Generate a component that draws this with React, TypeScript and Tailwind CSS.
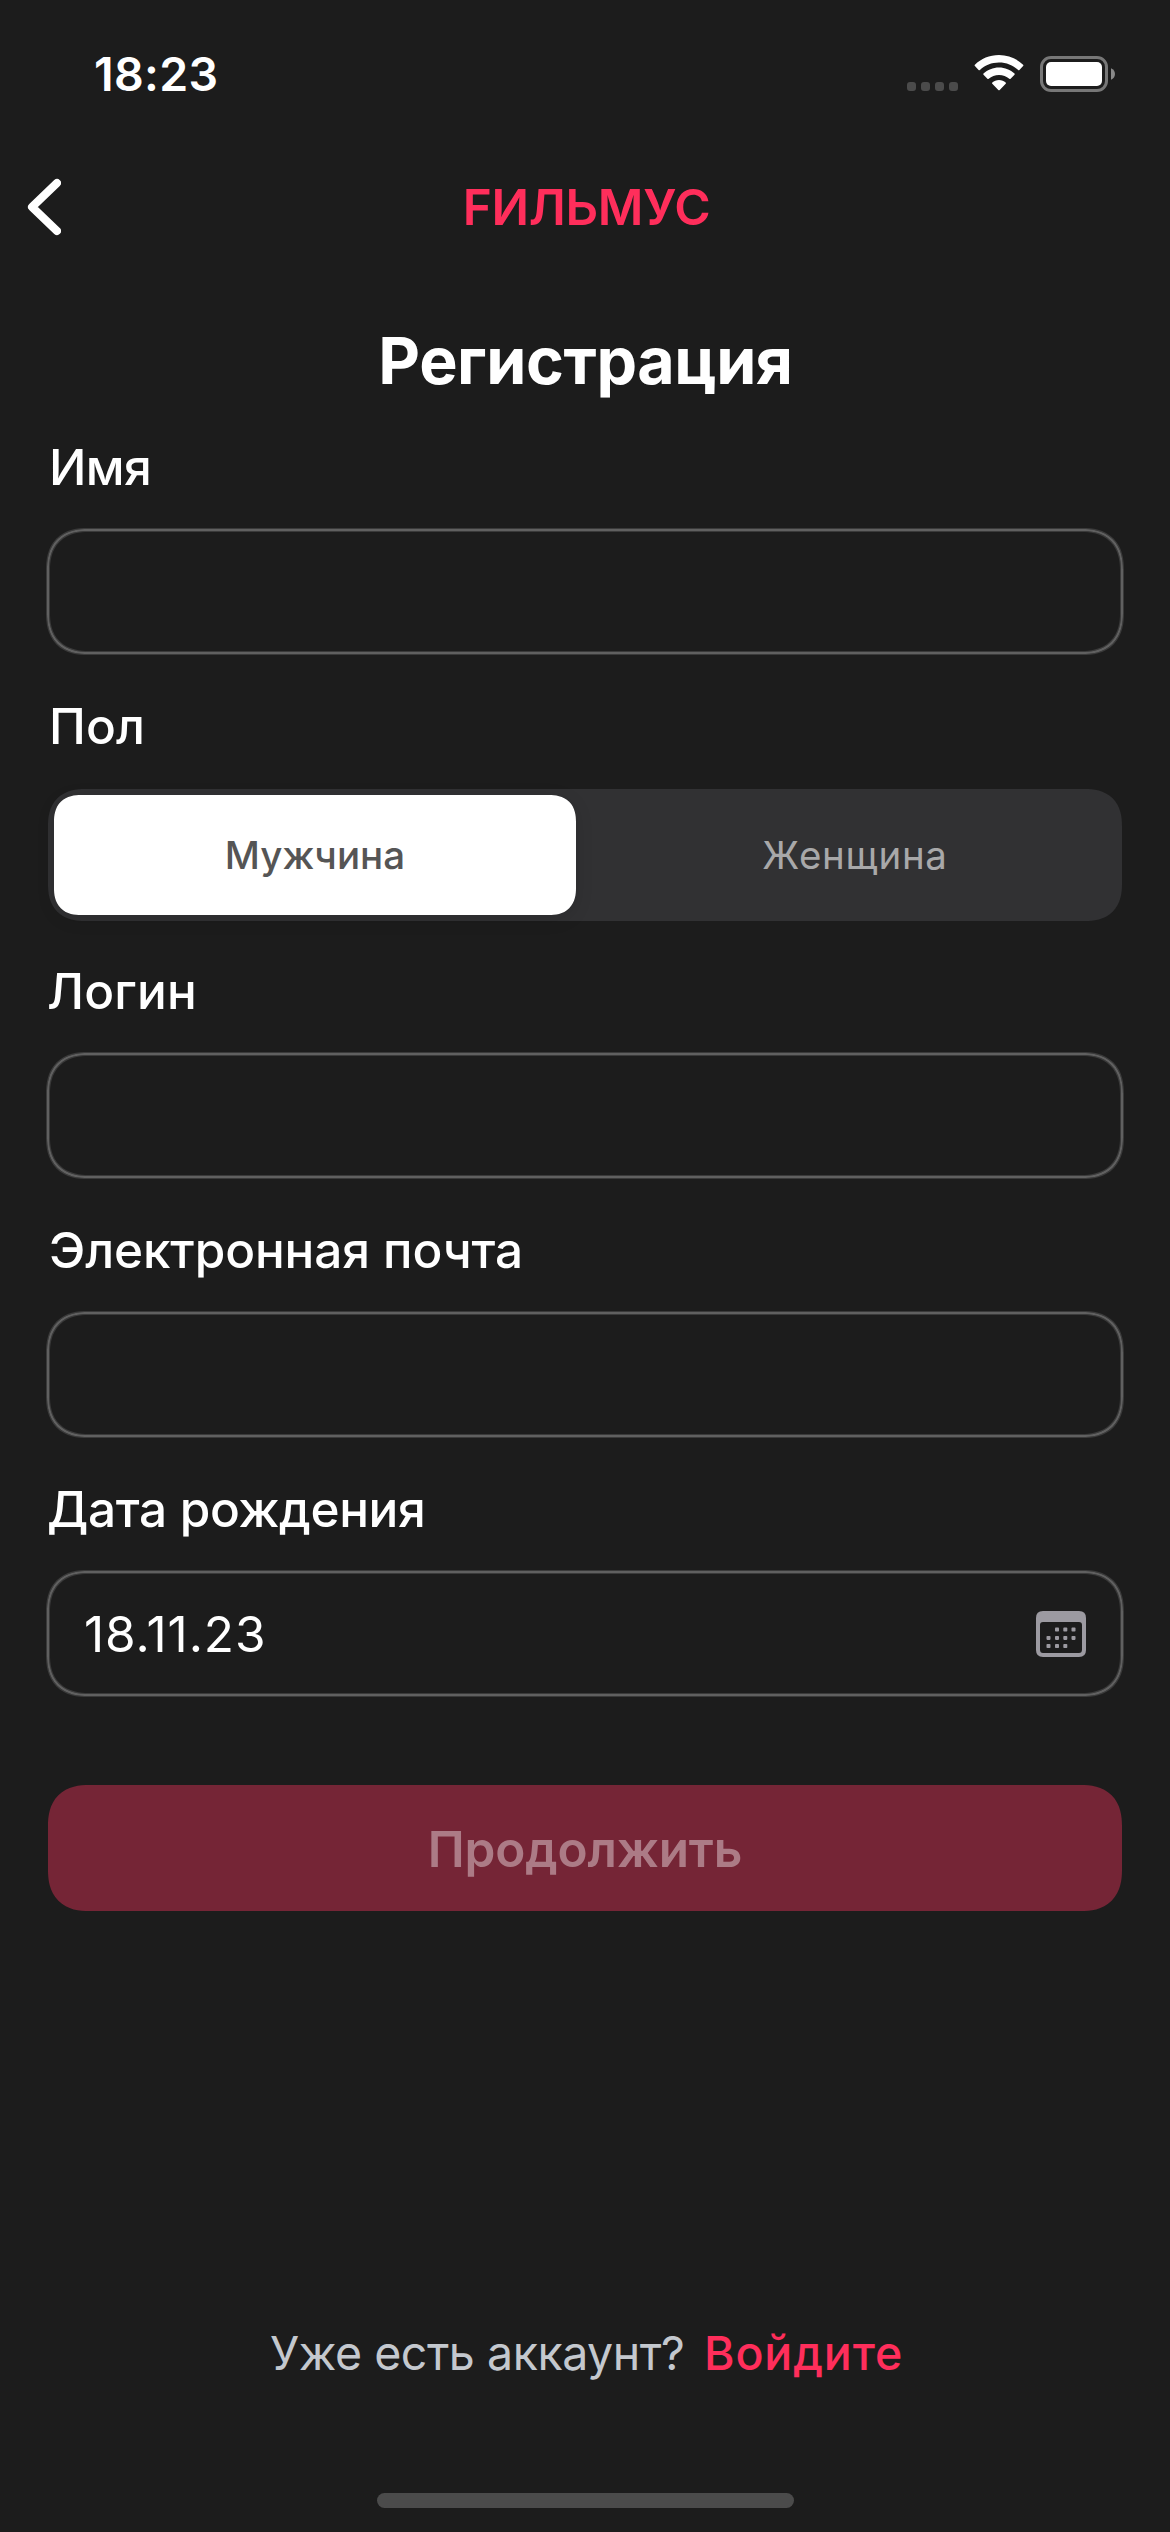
import type { ReactNode } from "react";

function StatusBar() {
  return (
    <header className="flex h-[148px] items-start justify-between pt-[44px] pr-[55px] pl-[94px]">
      <time className="text-[46.5px] leading-[61px] font-semibold tracking-[0.32px]">18:23</time>
      <div className="flex pt-[10px]">
        <div className="mt-[28px] flex gap-[5px]">
          <i className="size-[9px] rounded-[3px] bg-[#4b4b4b]" />
          <i className="size-[9px] rounded-[3px] bg-[#4b4b4b]" />
          <i className="size-[9px] rounded-[3px] bg-[#4b4b4b]" />
          <i className="size-[9px] rounded-[3px] bg-[#4b4b4b]" />
        </div>
        <svg className="ml-[16px]" width="50" height="38" viewBox="0 0 50 38" fill="#fff">
          <path d="M25 1C15.500 1 7 4.700.9 10.700Q.3 11.400.9 12L4.600 15.900Q5.200 16.500 5.900 15.900C11 11.200 17.600 8.500 25 8.500S39 11.200 44.100 15.900Q44.800 16.500 45.400 15.900L49.100 12Q49.700 11.400 49.100 10.700C43 4.700 34.500 1 25 1Z" />
          <path d="M25 13.500C19 13.500 13.600 15.900 9.500 19.600Q8.900 20.200 9.500 20.800L13.400 24.800Q14 25.400 14.700 24.800C17.500 22.400 21 20.900 25 20.900S32.500 22.400 35.300 24.800Q36 25.400 36.600 24.800L40.500 20.800Q41.100 20.200 40.500 19.600C36.400 15.900 31 13.500 25 13.500Z" />
          <path d="M25 26.100C22.300 26.100 20.100 27 18.300 28.500Q17.700 29.200 18.300 29.800L24.300 36Q25 36.700 25.700 36L31.700 29.800Q32.300 29.200 31.700 28.500C29.900 27 27.700 26.100 25 26.100Z" />
        </svg>
        <svg className="mt-[2px] ml-[16px]" width="75" height="36" viewBox="0 0 75 36">
          <rect x="1.500" y="1.500" width="65" height="33" rx="9.500" fill="none" stroke="#777" strokeWidth="3" />
          <rect x="6" y="6" width="56" height="24" rx="5" fill="#fff" />
          <path d="M71 12.200C73.500 13.200 75 15.400 75 18S73.500 22.800 71 23.800Z" fill="#898989" />
        </svg>
      </div>
    </header>
  );
}

function Field({ label, labelClass, children }: { label: string; labelClass: string; children?: ReactNode }) {
  return (
    <label className="block">
      <span className={`block h-[60px] text-[49.5px] leading-[60px] font-medium whitespace-nowrap ${labelClass}`}>{label}</span>
      <div className="-mx-px mt-[32px] flex h-[125px] items-center justify-between rounded-[41px] border-2 border-[#606060] pr-[35px] pl-[35px] shadow-[0_0_0_1px_#3a3a3a,inset_0_0_0_1px_#3a3a3a] [corner-shape:superellipse(1.25)]">
        {children}
      </div>
    </label>
  );
}

function CalendarIcon() {
  const dots = [
    [19, 16.6], [27.3, 16.6], [35.5, 16.6],
    [10.5, 24.9], [19, 24.9], [27.3, 24.9], [35.5, 24.9],
    [10.5, 33], [19, 33], [27.3, 33],
  ];
  return (
    <svg width="50" height="46" viewBox="0 0 50 46" fill="#9c9aa1">
      <path
        fillRule="evenodd"
        d="M7 0H43Q50 0 50 7V39Q50 46 43 46H7Q0 46 0 39V7Q0 0 7 0ZM7 11Q4 11 4 14V38.500Q4 42 7 42H43Q46 42 46 38.500V14Q46 11 43 11Z"
      />
      {dots.map(([x, y]) => (
        <rect key={`${x}-${y}`} x={x} y={y} width="4" height="4" rx="0.8" />
      ))}
    </svg>
  );
}

export default function App() {
  return (
    <div className="flex h-[2532px] w-[1170px] flex-col bg-[#1c1c1c] font-['Inter',sans-serif] text-white">
      <StatusBar />

      <nav className="grid h-[118px] grid-cols-[200px_1fr_200px] items-center">
        <button className="pl-[27px]" aria-label="Назад">
          <svg width="34" height="58" viewBox="0 0 34 58" fill="none" stroke="#fff" strokeWidth="8" strokeLinecap="round" strokeLinejoin="round">
            <path d="M30 5L5 29L30 53" />
          </svg>
        </button>
        <span className="pl-[3px] text-center text-[49.5px] leading-[60px] font-semibold tracking-[-0.3px] text-[#ff2e5b]">FИЛЬМУС</span>
      </nav>

      <h1 className="mt-[55px] h-[80px] pl-px text-center text-[64.5px] leading-[80px] font-bold tracking-[-0.45px]">Регистрация</h1>

      <main className="flex flex-col px-[48px] pt-[36px]">
        <Field label="Имя" labelClass="pl-px tracking-[-0.63px]" />

        <div className="mt-[42px]">
          <span className="block h-[60px] pl-px text-[49.5px] leading-[60px] font-medium tracking-[0.12px]">Пол</span>
          <div className="mt-[33px] flex h-[132px] rounded-[37px] bg-[#313133] py-[6px] pl-[6px] text-[38.5px] [corner-shape:superellipse(1.25)]">
            <button className="flex w-[522px] items-center justify-center rounded-[27px] bg-white pt-[2px] font-medium tracking-[0.04px] text-[#555] shadow-[0_4px_18px_rgba(0,0,0,0.12)] [corner-shape:superellipse(1.25)]">
              Мужчина
            </button>
            <button className="flex flex-1 items-center justify-center pt-[2px] pl-[12px] tracking-[0.69px] text-[#a8a8a9]">Женщина</button>
          </div>
        </div>

        <div className="mt-[40px] flex flex-col gap-[42px]">
          <Field label="Логин" labelClass="-ml-px tracking-[0.2px]" />
          <Field label="Электронная почта" labelClass="pl-px tracking-[-0.12px]" />
          <Field label="Дата рождения" labelClass="-ml-px tracking-[-0.34px]">
            <span className="text-[49.5px] leading-[60px] tracking-[0.95px]">18.11.23</span>
            <CalendarIcon />
          </Field>
        </div>

        <button className="mt-[89px] flex h-[126px] items-center justify-center rounded-[41px] bg-[#752536] pt-[2px] text-[49.5px] leading-[60px] font-semibold tracking-[-0.12px] text-[#ac7b86] [corner-shape:superellipse(1.25)]">
          Продолжить
        </button>
      </main>

      <footer className="mt-auto flex flex-col items-center">
        <p className="flex h-[60px] w-full pl-[270px] text-[46.5px] leading-[60px] whitespace-nowrap">
          <span className="w-[434px] tracking-[-0.46px] text-[#c4c8ce]">Уже есть аккаунт?</span>
          <a className="font-medium tracking-[0.86px] text-[#ff2e5b]">Войдите</a>
        </p>
        <div className="mt-[110px] mb-[24px] h-[15px] w-[417px] rounded-full bg-[#4b4b4b]" />
      </footer>
    </div>
  );
}
